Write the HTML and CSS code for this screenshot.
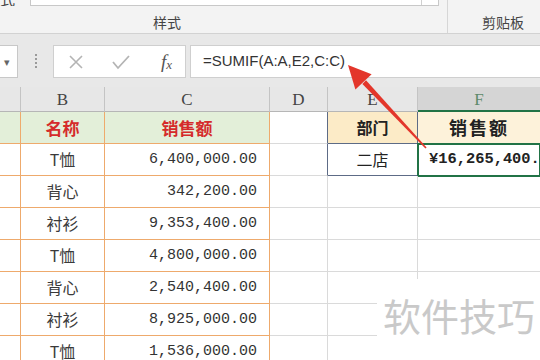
FILE: index.html
```html
<!DOCTYPE html>
<html lang="zh-CN">

<head>
    <meta charset="UTF-8">
    <meta name="viewport" content="width=device-width, initial-scale=1.0">
    <title>SUMIF</title>
    <link rel="stylesheet" href="styles.css">
</head>

<body>
    <!-- ribbon, only its bottom edge is visible -->
    <div class="ribbon">
        <div class="group group-styles">
            <div class="ribbon-top">
                <span class="cut-text">式</span>
                <div class="gallery">
                    <div class="gallery-main"></div>
                    <div class="gallery-btn"></div>
                </div>
            </div>
            <div class="group-label label-styles">样式</div>
        </div>
        <div class="group group-clip">
            <div class="group-label label-clip">剪贴板</div>
        </div>
    </div>

    <!-- formula bar -->
    <div class="formula-bar">
        <div class="name-box"><span class="drop">&#9662;</span></div>
        <div class="grip"><i></i><i></i><i></i><i></i></div>
        <div class="fx-buttons">
            <svg class="fx-icon" width="16" height="16" viewBox="0 0 16 16">
                <path d="M2 2 L14 14 M14 2 L2 14" stroke="#b4b4b4" stroke-width="1.6" fill="none"/>
            </svg>
            <svg class="fx-icon" width="18" height="16" viewBox="0 0 18 16">
                <path d="M1 8 L6 14 L17 2" stroke="#b4b4b4" stroke-width="1.8" fill="none"/>
            </svg>
            <span class="fx-label">f<sub>x</sub></span>
        </div>
        <div class="formula-input">=SUMIF(A:A,E2,C:C)</div>
    </div>

    <!-- sheet -->
    <div class="sheet">
        <div class="row col-heads">
            <div class="cell c-a"></div>
            <div class="cell c-b">B</div>
            <div class="cell c-c">C</div>
            <div class="cell c-d">D</div>
            <div class="cell c-e">E</div>
            <div class="cell c-f active-col">F</div>
        </div>

        <div class="row table-head">
            <div class="cell c-a"></div>
            <div class="cell c-b">名称</div>
            <div class="cell c-c">销售额</div>
            <div class="cell c-d edge"></div>
            <div class="cell c-e dept-head">部门</div>
            <div class="cell c-f sum-head">销售额</div>
        </div>

        <div class="row data first">
            <div class="cell c-a"></div>
            <div class="cell c-b">T恤</div>
            <div class="cell c-c num">6,400,000.00</div>
            <div class="cell c-d edge"></div>
            <div class="cell c-e dept">二店</div>
            <div class="cell c-f result">¥16,265,400.00</div>
        </div>
        <div class="row data">
            <div class="cell c-a"></div>
            <div class="cell c-b">背心</div>
            <div class="cell c-c num">342,200.00</div>
            <div class="cell c-d"></div>
            <div class="cell c-e"></div>
            <div class="cell c-f"></div>
        </div>
        <div class="row data">
            <div class="cell c-a"></div>
            <div class="cell c-b">衬衫</div>
            <div class="cell c-c num">9,353,400.00</div>
            <div class="cell c-d"></div>
            <div class="cell c-e"></div>
            <div class="cell c-f"></div>
        </div>
        <div class="row data">
            <div class="cell c-a"></div>
            <div class="cell c-b">T恤</div>
            <div class="cell c-c num">4,800,000.00</div>
            <div class="cell c-d"></div>
            <div class="cell c-e"></div>
            <div class="cell c-f"></div>
        </div>
        <div class="row data">
            <div class="cell c-a"></div>
            <div class="cell c-b">背心</div>
            <div class="cell c-c num">2,540,400.00</div>
            <div class="cell c-d"></div>
            <div class="cell c-e"></div>
            <div class="cell c-f"></div>
        </div>
        <div class="row data">
            <div class="cell c-a"></div>
            <div class="cell c-b">衬衫</div>
            <div class="cell c-c num">8,925,000.00</div>
            <div class="cell c-d"></div>
            <div class="cell c-e"></div>
            <div class="cell c-f"></div>
        </div>
        <div class="row data">
            <div class="cell c-a"></div>
            <div class="cell c-b">T恤</div>
            <div class="cell c-c num">1,536,000.00</div>
            <div class="cell c-d"></div>
            <div class="cell c-e"></div>
            <div class="cell c-f"></div>
        </div>
    </div>

    <!-- watermark -->
    <div class="watermark">软件技巧</div>

    <!-- red arrow pointing at the formula -->
    <svg class="arrow" width="540" height="360" viewBox="0 0 540 360">
        <polygon points="362.4,84 366,80.2 426.6,147.4 425.4,148.6" fill="#e3362b"/>
        <polygon points="348,65 355.4,89.5 371.6,74.2" fill="#e3362b"/>
    </svg>
</body>

</html>
```

FILE: styles.css
```css
/* page */
body {
    margin: 0;
    width: 540px;
    height: 360px;
    overflow: hidden;
    position: relative;
    background: #fff;
    font-family: "Noto Sans CJK SC", "Noto Sans", sans-serif;
    color: #333;
}

/* ribbon */
.ribbon {
    display: flex;
    height: 34px;
    box-sizing: border-box;
    background: #f3f3f3;
    border-bottom: 1px solid #d2d2d2;
}

.group-styles {
    width: 448px;
    box-sizing: border-box;
    border-right: 1px solid #d6d6d6;
}

.ribbon-top {
    display: flex;
    height: 6px;
}

.cut-text {
    width: 30px;
    font-size: 15px;
    line-height: 15px;
    margin-top: -9px;
    color: #444;
    overflow: hidden;
}

.gallery {
    display: flex;
    width: 407px;
    height: 5px;
    background: #fff;
    border: 1px solid #c8c8c8;
    border-top: none;
}

.gallery-main {
    flex: 1;
    border-right: 1px solid #d0d0d0;
}

.gallery-btn {
    width: 16px;
}

.group-label {
    font-size: 14px;
    line-height: 20px;
    color: #444;
}

.label-styles {
    margin-top: 6px;
    padding-left: 153px;
}

.label-clip {
    padding-top: 12px;
    padding-left: 34px;
}

/* formula bar */
.formula-bar {
    display: flex;
    align-items: flex-start;
    height: 53px;
    box-sizing: border-box;
    padding-top: 11px;
    background: #e8e8e8;
}

.name-box {
    width: 18px;
    height: 33px;
    box-sizing: border-box;
    background: #fff;
    border: 1px solid #c8c8c8;
    border-left: none;
    font-size: 11px;
    line-height: 31px;
    color: #666;
}

.drop {
    padding-left: 4px;
}

.grip {
    display: flex;
    flex-direction: column;
    gap: 2px;
    margin: 9px 0 0 17px;
}

.grip i {
    width: 2px;
    height: 2px;
    background: #9a9a9a;
}

.fx-buttons {
    display: flex;
    align-items: center;
    width: 133px;
    height: 33px;
    box-sizing: border-box;
    margin-left: 16px;
    background: #fff;
    border: 1px solid #cfcfcf;
    padding-left: 14px;
    gap: 28px;
}

.fx-label {
    font-family: "Liberation Serif", serif;
    font-style: italic;
    font-size: 19px;
    color: #555;
    margin-left: 3px;
}

.fx-label sub {
    font-size: 13px;
    vertical-align: -1px;
}

.formula-input {
    flex: 1;
    height: 33px;
    box-sizing: border-box;
    margin-left: 4px;
    padding-left: 12px;
    background: #fff;
    border: 1px solid #cfcfcf;
    border-right: none;
    font-family: "Liberation Sans", sans-serif;
    font-size: 15px;
    line-height: 30px;
    color: #333;
}

/* sheet grid */
.row {
    display: grid;
    grid-template-columns: 21px 84px 165px 58px 90px 122px;
    height: 32px;
}

.cell {
    box-sizing: border-box;
    border-right: 1px solid #dadada;
    border-bottom: 1px solid #dadada;
    text-align: center;
    line-height: 31px;
    white-space: nowrap;
    overflow: hidden;
}

.c-f {
    border-right: none;
}

/* column letters */
.col-heads {
    height: 25px;
    background: #e7e7e7;
}

.col-heads .cell {
    border-right-color: #c4c4c4;
    border-bottom-color: #b6b6b6;
    font-family: "Liberation Serif", serif;
    font-size: 17px;
    line-height: 25px;
    color: #444;
}

.col-heads .active-col {
    background: #d5d5d5;
    border-bottom: 2px solid #217346;
    color: #5d8a6a;
}

/* orange table, columns A to C */
.row .c-a,
.row .c-b,
.row .c-c {
    border-color: #eeaa6c;
}

.col-heads .c-a,
.col-heads .c-b,
.col-heads .c-c {
    border-right-color: #c4c4c4;
    border-bottom-color: #b6b6b6;
}

.table-head .c-a,
.table-head .c-b,
.table-head .c-c {
    background: #e3efd9;
}

.table-head .c-b,
.table-head .c-c {
    font-size: 17px;
    font-weight: bold;
    color: #d52b2b;
}

.data .c-b {
    font-size: 16px;
    color: #3a3a3a;
}

.num {
    text-align: right;
    padding-right: 12px;
    font-family: "Liberation Mono", monospace;
    font-size: 15px;
    color: #333;
}

/* lookup table, columns E and F */
.edge {
    border-right-color: #5d6b86;
}

.dept-head {
    background: #fcebc7;
    border-color: #5d6b86;
    font-size: 16px;
    font-weight: bold;
    color: #222;
}

.sum-head {
    background: #fdf2da;
    font-size: 18px;
    font-weight: bold;
    letter-spacing: 2px;
    color: #222;
    border-bottom: none;
}

.dept {
    border-color: #5d6b86;
    font-size: 16px;
    color: #222;
}

.result {
    text-align: left;
    padding-left: 11px;
    font-family: "Liberation Mono", monospace;
    font-size: 15.4px;
    font-weight: bold;
    color: #222;
    border-bottom-color: #5d6b86;
    outline: 2px solid #217346;
    outline-offset: -1px;
}

/* watermark */
.watermark {
    position: absolute;
    left: 377px;
    top: 279px;
    width: 163px;
    height: 81px;
    box-sizing: border-box;
    background: #fff;
    padding: 14px 0 0 6px;
    font-size: 38px;
    line-height: 44px;
    color: #c9c9c9;
}

/* arrow overlay */
.arrow {
    position: absolute;
    left: 0;
    top: 0;
    pointer-events: none;
}
```
